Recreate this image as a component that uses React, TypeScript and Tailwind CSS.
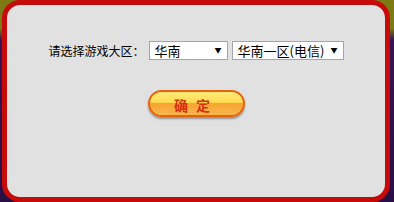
import React from "react";

const FONT = { fontFamily: '"Noto Sans CJK SC", "Liberation Sans", sans-serif' };

function FakeSelect({ value, width }: { value: string; width: string }) {
  return (
    <div
      className={`flex h-[19px] ${width} items-center justify-between border border-[#a5a5a5] bg-white pl-[5px] pr-[5px] text-[13px] leading-none text-black`}
    >
      <span>{value}</span>
      <span className="text-[7px]">▼</span>
    </div>
  );
}

export default function App() {
  return (
    <div
      className="flex h-[202px] w-[394px] bg-[linear-gradient(to_bottom,#7d7a14_0px,#7d7a14_28px,#3b1254_40px,#2a0f45_100%)] pl-[2px] pr-[4px]"
      style={FONT}
    >
      <div className="flex h-[202px] flex-1 flex-col items-center rounded-[18px] border-[5px] border-[#c60b0b] bg-[#e1e1e1]">
        <div className="mt-[36px] flex items-center">
          <span className="mr-[4px] w-[96px] text-[12px] text-black">请选择游戏大区：</span>
          <FakeSelect value="华南" width="w-[79px]" />
          <div className="w-[4px]" />
          <FakeSelect value="华南一区(电信)" width="w-[112px]" />
        </div>
        <button
          className="mt-[30px] h-[27px] w-[97px] overflow-hidden rounded-full border-2 border-[#e8620e] bg-[linear-gradient(to_bottom,#ffea78_0%,#ffdc52_45%,#f8a432_50%,#f7b64e_100%)] shadow-[0_2px_2px_rgba(0,0,0,0.35)]"
        >
          <span className="text-[14px] font-bold tracking-[8px] text-[#d9300f]">确定</span>
        </button>
      </div>
    </div>
  );
}
